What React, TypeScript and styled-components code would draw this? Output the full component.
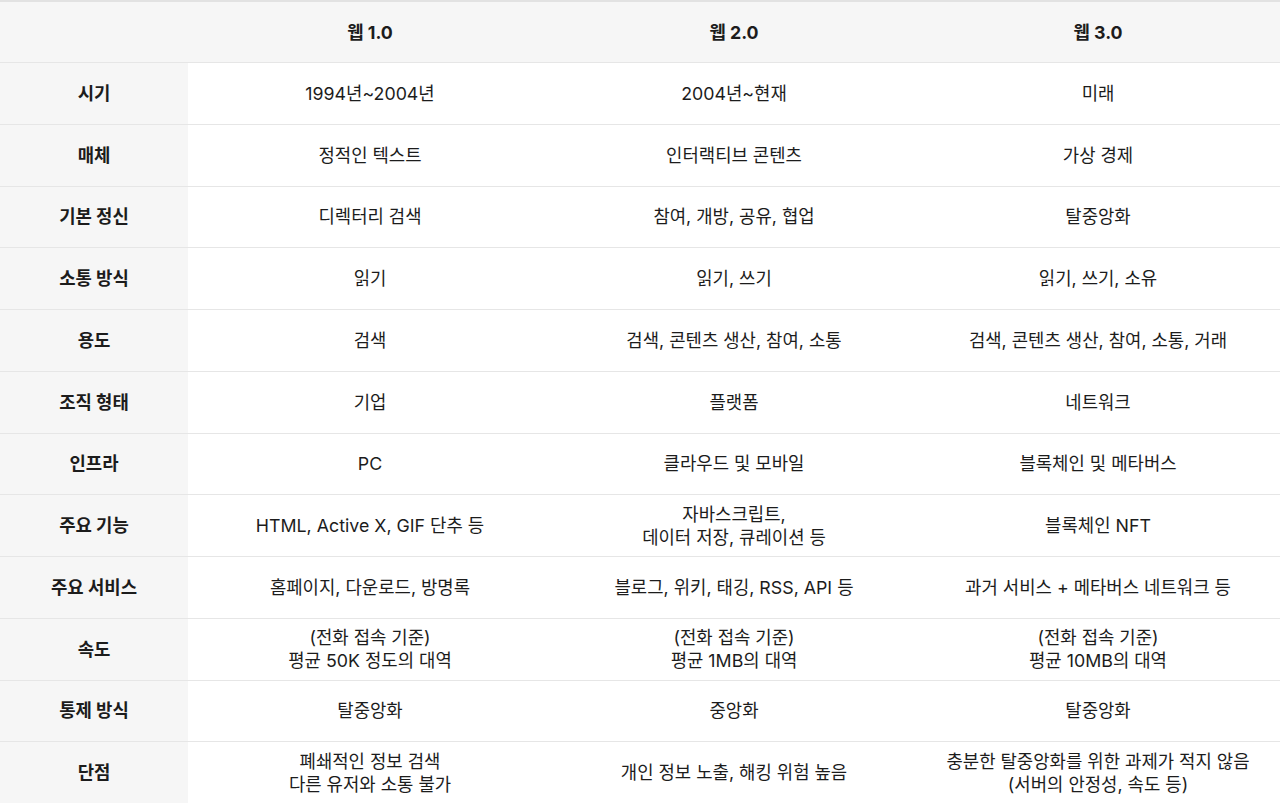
import React from "react";
import styled, { createGlobalStyle } from "styled-components";

const Global = createGlobalStyle`
  html, body { margin: 0; padding: 0; background: #ffffff; }
  body { font-family: "Inter", "Noto Sans CJK KR", "Noto Sans", sans-serif; color: #1c1c1c; }
`;

const Table = styled.div`
  width: 1280px;
  border-top: 2px solid #e2e2e2;
  display: grid;
  grid-template-columns: 188px repeat(3, 1fr);
`;

const Cell = styled.div<{ $head?: boolean; $shade?: boolean; $first?: boolean }>`
  height: ${(p) => (p.$first ? "60px" : "61.75px")};
  box-sizing: border-box;
  border-top: ${(p) => (p.$first ? "none" : "1px solid #e6e6e6")};
  background: ${(p) => (p.$shade ? "#f6f6f6" : "#ffffff")};
  display: flex;
  align-items: center;
  justify-content: center;
  text-align: center;
  font-size: 17.8px;
  line-height: 23px;
  font-weight: ${(p) => (p.$head ? 700 : 400)};
  letter-spacing: 0;
  white-space: pre-line;
`;

const headers = ["", "웹 1.0", "웹 2.0", "웹 3.0"];

const rows: string[][] = [
  ["시기", "1994년~2004년", "2004년~현재", "미래"],
  ["매체", "정적인 텍스트", "인터랙티브 콘텐츠", "가상 경제"],
  ["기본 정신", "디렉터리 검색", "참여, 개방, 공유, 협업", "탈중앙화"],
  ["소통 방식", "읽기", "읽기, 쓰기", "읽기, 쓰기, 소유"],
  ["용도", "검색", "검색, 콘텐츠 생산, 참여, 소통", "검색, 콘텐츠 생산, 참여, 소통, 거래"],
  ["조직 형태", "기업", "플랫폼", "네트워크"],
  ["인프라", "PC", "클라우드 및 모바일", "블록체인 및 메타버스"],
  ["주요 기능", "HTML, Active X, GIF 단추 등", "자바스크립트,\n데이터 저장, 큐레이션 등", "블록체인 NFT"],
  ["주요 서비스", "홈페이지, 다운로드, 방명록", "블로그, 위키, 태깅, RSS, API 등", "과거 서비스 + 메타버스 네트워크 등"],
  ["속도", "(전화 접속 기준)\n평균 50K 정도의 대역", "(전화 접속 기준)\n평균 1MB의 대역", "(전화 접속 기준)\n평균 10MB의 대역"],
  ["통제 방식", "탈중앙화", "중앙화", "탈중앙화"],
  ["단점", "폐쇄적인 정보 검색\n다른 유저와 소통 불가", "개인 정보 노출, 해킹 위험 높음", "충분한 탈중앙화를 위한 과제가 적지 않음\n(서버의 안정성, 속도 등)"],
];

export default function App() {
  return (
    <>
      <Global />
      <Table>
        {headers.map((h, i) => (
          <Cell key={"h" + i} $head $shade $first>
            {h}
          </Cell>
        ))}
        {rows.map((r, ri) =>
          r.map((c, ci) => (
            <Cell key={ri + "-" + ci} $head={ci === 0} $shade={ci === 0}>
              {c}
            </Cell>
          ))
        )}
      </Table>
    </>
  );
}
